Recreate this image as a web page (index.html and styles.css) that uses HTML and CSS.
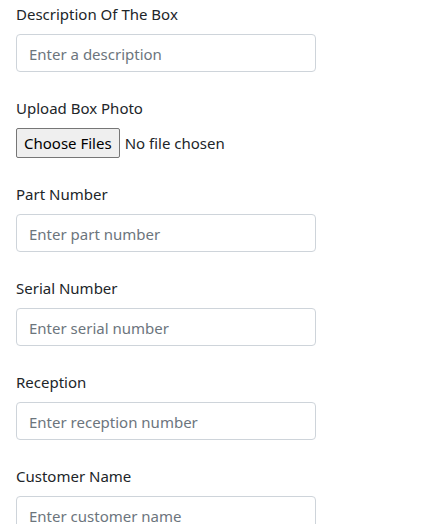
FILE: index.html
```html
<!DOCTYPE html>
<html lang="en">
<head>
    <meta charset="UTF-8">
    <meta name="viewport" content="width=device-width, initial-scale=1.0">
    <title>Box</title>
    <link rel="stylesheet" href="styles.css">
</head>
<body>
    <form class="box-form">
        <div class="form-group">
            <label for="desc">Description Of The Box</label>
            <input type="text" id="desc" class="form-control" placeholder="Enter a description">
        </div>
        <div class="form-group">
            <label for="photo">Upload Box Photo</label>
            <input type="file" id="photo" class="form-file" multiple>
        </div>
        <div class="form-group">
            <label for="part">Part Number</label>
            <input type="text" id="part" class="form-control" placeholder="Enter part number">
        </div>
        <div class="form-group">
            <label for="serial">Serial Number</label>
            <input type="text" id="serial" class="form-control" placeholder="Enter serial number">
        </div>
        <div class="form-group">
            <label for="reception">Reception</label>
            <input type="text" id="reception" class="form-control" placeholder="Enter reception number">
        </div>
        <div class="form-group">
            <label for="customer">Customer Name</label>
            <input type="text" id="customer" class="form-control" placeholder="Enter customer name">
        </div>
    </form>
</body>
</html>
```

FILE: styles.css
```css
body {
    margin: 0;
    font-family: "Noto Sans", "Open Sans", sans-serif;
    font-size: 15px;
    color: #212529;
    background: #fff;
}
.box-form {
    padding: 2px 16px 0;
    width: 300px;
}
.form-group {
    display: flex;
    flex-direction: column;
    margin-bottom: 24px;
}
.form-group label {
    display: block;
    line-height: 24px;
    margin-bottom: 8px;
}
.form-control {
    box-sizing: border-box;
    width: 300px;
    height: 38px;
    padding: 7px 12px 5px;
    border: 1px solid #ced4da;
    border-radius: 4px;
    font-family: inherit;
    font-size: 15px;
    color: #495057;
    outline: none;
}
.form-control::placeholder {
    color: #6c757d;
}
.form-file {
    font-family: inherit;
    font-size: 15px;
    color: #212529;
    height: 30px;
    padding: 0;
}
.form-file::file-selector-button {
    font-family: inherit;
    font-size: 15px;
    height: 30px;
    padding: 0 7px;
    margin-right: 5px;
    background: #efefef;
    border: 1px solid #767676;
    border-radius: 2px;
    color: #000;
}
```
